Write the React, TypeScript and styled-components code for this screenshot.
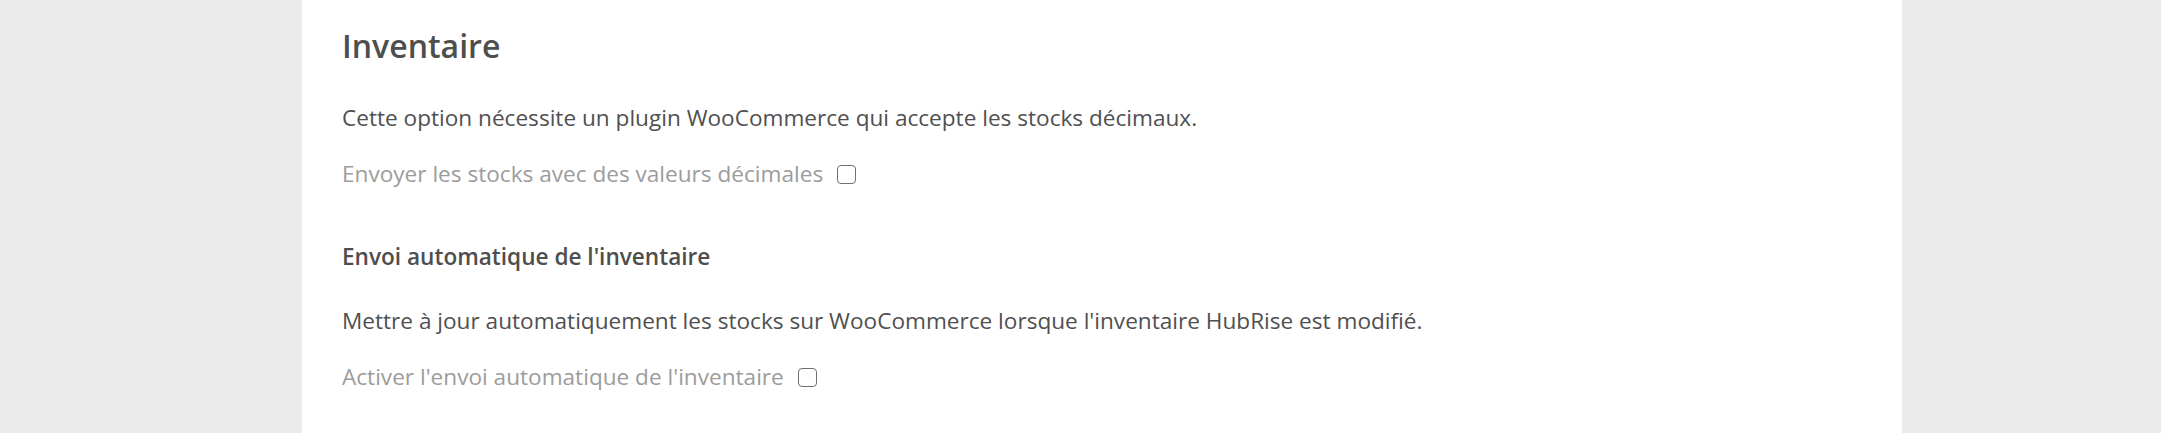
import styled, { createGlobalStyle } from 'styled-components';

const GlobalStyle = createGlobalStyle`
  html, body {
    margin: 0;
    padding: 0;
    background: #ebebeb;
  }
  body {
    font-family: "Open Sans", "Noto Sans", sans-serif;
    -webkit-font-smoothing: antialiased;
  }
`;

const Page = styled.div`
  min-height: 100vh;
  padding-left: 302px;
`;

const Panel = styled.section`
  width: 1600px;
  min-height: 100vh;
  box-sizing: border-box;
  background: #fff;
  padding: 26px 40px 0;
`;

const Title = styled.h2`
  margin: 0;
  font-size: 32px;
  line-height: 40px;
  font-weight: 600;
  color: #4e4e4e;
`;

const SubTitle = styled.h3`
  margin: 0;
  font-size: 22.6px;
  line-height: 32px;
  font-weight: 600;
  color: #4e4e4e;
`;

const Text = styled.p<{ $top: number }>`
  margin: ${(p) => p.$top}px 0 0;
  font-size: 22.6px;
  line-height: 30px;
  color: #505050;
`;

const Option = styled.label<{ $top: number }>`
  display: flex;
  align-items: center;
  gap: 14px;
  margin-top: ${(p) => p.$top}px;
  font-size: 22.6px;
  line-height: 30px;
  color: #9c9c9c;
  cursor: pointer;
`;

const Box = styled.input.attrs({ type: 'checkbox' })`
  appearance: none;
  margin: 0;
  width: 19px;
  height: 19px;
  border: 1.5px solid #707070;
  border-radius: 4px;
  background: #fff;
  box-sizing: border-box;
`;

const Section = styled.div<{ $top: number }>`
  margin-top: ${(p) => p.$top}px;
`;

function App() {
  return (
    <Page>
      <GlobalStyle />
      <Panel>
        <Title>Inventaire</Title>
        <Text $top={37}>
          Cette option nécessite un plugin WooCommerce qui accepte les stocks décimaux.
        </Text>
        <Option $top={26}>
          Envoyer les stocks avec des valeurs décimales
          <Box />
        </Option>

        <Section $top={52}>
          <SubTitle>Envoi automatique de l'inventaire</SubTitle>
          <Text $top={33}>
            Mettre à jour automatiquement les stocks sur WooCommerce lorsque l'inventaire HubRise est modifié.
          </Text>
          <Option $top={26}>
            Activer l'envoi automatique de l'inventaire
            <Box />
          </Option>
        </Section>
      </Panel>
    </Page>
  );
}

export default App;
